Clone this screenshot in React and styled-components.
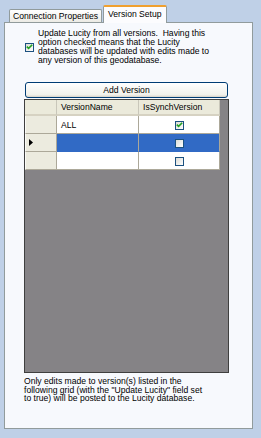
import React from 'react';
import styled, { createGlobalStyle } from 'styled-components';

const GlobalStyle = createGlobalStyle`
  html, body {
    margin: 0;
    padding: 0;
    background: #bfd0e7;
  }
  body {
    font-family: "Liberation Sans", Arial, sans-serif;
  }
`;

const Page = styled.div`
  width: 261px;
  height: 438px;
  box-sizing: border-box;
  padding: 0 8px 9px 4px;
  background: #bfd0e7;
  display: flex;
  flex-direction: column;
  font-size: 8.6px;
  color: #000;
`;

const TabStrip = styled.div`
  height: 22px;
  display: flex;
  align-items: flex-end;
  padding-left: 5px;
  flex-shrink: 0;
`;

const Tab = styled.div`
  box-sizing: border-box;
  height: ${({ $active }) => ($active ? '18px' : '13px')};
  padding: 0 ${({ $active }) => ($active ? '4px' : '3px')};
  display: flex;
  align-items: center;
  white-space: nowrap;
  border: 1px solid #919b9c;
  border-bottom: none;
  border-top: ${({ $active }) => ($active ? '2px solid #f0a030' : '1px solid #919b9c')};
  border-radius: 2px 2px 0 0;
  background: ${({ $active }) =>
    $active ? '#fcfcfe' : 'linear-gradient(#ffffff, #ecebe5)'};
  margin-bottom: ${({ $active }) => ($active ? '-1px' : '0')};
  margin-left: ${({ $active }) => ($active ? '1px' : '0')};
  position: relative;
  z-index: ${({ $active }) => ($active ? 1 : 0)};
  padding-bottom: ${({ $active }) => ($active ? '2px' : '0')};
`;

const Panel = styled.div`
  flex: 1;
  box-sizing: border-box;
  border: 1px solid #919b9c;
  background: #f7f9fd;
  padding: 6px 23px 0 19px;
  display: flex;
  flex-direction: column;
`;

const CheckRow = styled.div`
  display: flex;
  align-items: center;
  gap: 4px;
  padding-left: 1px;
`;

const Box = styled.span`
  box-sizing: border-box;
  width: ${({ $size }) => $size || 9}px;
  height: ${({ $size }) => $size || 9}px;
  border: 1px solid #1c5180;
  background: linear-gradient(135deg, #dcdcd6, #ffffff);
  display: inline-flex;
  align-items: center;
  justify-content: center;
  flex-shrink: 0;
`;

const Lines = styled.div`
  line-height: 9px;
  white-space: nowrap;
`;

const AddButton = styled.div`
  box-sizing: border-box;
  height: 16px;
  margin: 17px 0 1px 1px;
  width: 203px;
  border: 1px solid #003c74;
  border-radius: 3px;
  background: linear-gradient(#ffffff, #f0f0ea 85%, #d6d0c5);
  display: flex;
  align-items: center;
  justify-content: center;
`;

const Grid = styled.div`
  box-sizing: border-box;
  width: 205px;
  height: 274px;
  border: 1px solid #3f3f3f;
  background: #858386;
  display: flex;
  flex-direction: column;
`;

const Row = styled.div`
  display: grid;
  grid-template-columns: 32px 82px 81px;
  height: ${({ $h }) => $h}px;
`;

const HeadCell = styled.div`
  box-sizing: border-box;
  background: #ebeadb;
  border-right: 1px solid #c9c7ba;
  border-bottom: 2px solid #d6d2c2;
  display: flex;
  align-items: center;
  padding-left: ${({ $pad }) => $pad || 0}px;
`;

const RowHead = styled.div`
  box-sizing: border-box;
  background: #ecebdf;
  border-right: 1px solid #aca899;
  border-bottom: 1px solid #aca899;
  border-left: 1px solid #fbfbf7;
  display: flex;
  align-items: center;
  padding-left: 3px;
`;

const Cell = styled.div`
  box-sizing: border-box;
  background: ${({ $sel }) => ($sel ? '#316ac5' : '#ffffff')};
  border-right: 1px solid #aca899;
  border-bottom: 1px solid ${({ $sel }) => ($sel ? '#316ac5' : '#aca899')};
  display: flex;
  align-items: center;
  justify-content: ${({ $center }) => ($center ? 'center' : 'flex-start')};
  padding-left: ${({ $center }) => ($center ? 0 : 4)}px;
  padding-top: 1px;
`;

const Footer = styled.div`
  margin-top: 4px;
  line-height: 8.6px;
  white-space: nowrap;
`;

const Check = () => (
  <svg width="7" height="6" viewBox="0 0 7 6">
    <path d="M0.8 2.6 L2.6 4.4 L6.2 0.8" stroke="#21a121" strokeWidth="1.6" fill="none" />
  </svg>
);

const Arrow = () => (
  <svg width="4" height="7" viewBox="0 0 4 7">
    <path d="M0 0 L4 3.5 L0 7 Z" fill="#000" />
  </svg>
);

export default function App() {
  const rows = [
    { name: 'ALL', checked: true, current: false },
    { name: '', checked: false, current: true },
    { name: '', checked: false, current: false },
  ];
  return (
    <Page>
      <GlobalStyle />
      <TabStrip>
        <Tab>Connection Properties</Tab>
        <Tab $active>Version Setup</Tab>
      </TabStrip>
      <Panel>
        <CheckRow>
          <Box $size={9}>
            <Check />
          </Box>
          <Lines>
            Update Lucity from all versions.&nbsp; Having this
            <br />
            option checked means that the Lucity
            <br />
            databases will be updated with edits made to
            <br />
            any version of this geodatabase.
          </Lines>
        </CheckRow>
        <AddButton>Add Version</AddButton>
        <Grid>
          <Row $h={16}>
            <HeadCell />
            <HeadCell $pad={4}>VersionName</HeadCell>
            <HeadCell $pad={4}>IsSynchVersion</HeadCell>
          </Row>
          {rows.map((r, i) => (
            <Row $h={18} key={i}>
              <RowHead>{r.current && <Arrow />}</RowHead>
              <Cell $sel={r.current}>{r.name}</Cell>
              <Cell $sel={r.current} $center>
                <Box $size={9}>{r.checked && <Check />}</Box>
              </Cell>
            </Row>
          ))}
        </Grid>
        <Footer>
          Only edits made to version(s) listed in the
          <br />
          following grid (with the "Update Lucity" field set
          <br />
          to true) will be posted to the Lucity database.
        </Footer>
      </Panel>
    </Page>
  );
}
